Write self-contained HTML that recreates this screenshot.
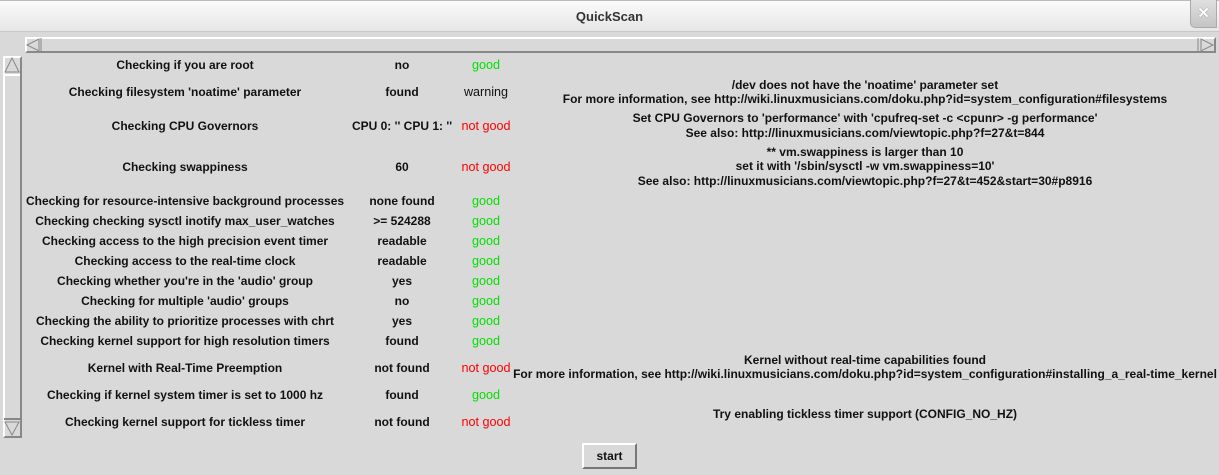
<!DOCTYPE html>
<html><head><meta charset="utf-8"><style>
*{margin:0;padding:0;box-sizing:border-box}
body{width:1219px;height:475px;background:#d9d9d9;position:relative;overflow:hidden;font-family:"Liberation Sans",sans-serif;font-weight:bold;font-size:12px;color:#111}
.title{position:absolute;left:0;top:0;width:1219px;height:32px;background:linear-gradient(#fafafa,#e6e6e6);border-bottom:1px solid #c8c8c8;text-align:center;line-height:32px;font-size:13px;color:#333;border-top:1px solid #bbb}
.close{position:absolute;left:1190px;top:0;width:27px;height:28px;border:1px solid #aaa;border-top:none;border-radius:0 0 0 5px;background:linear-gradient(#e0e0e0,#c4c4c4);color:#fff;text-align:center;line-height:28px;font-size:15px;text-shadow:0 0 1px #666}
.t{position:absolute;white-space:nowrap;transform:translate(-50%,-50%);line-height:14px}
.g{color:#00e000;font-weight:normal;font-size:12.6px}
.b{color:#f00;font-weight:normal;font-size:12.6px}
.w{font-weight:normal;font-size:12.6px}
.hs{position:absolute;left:25px;top:37px;width:1191px;height:16px;border:2px solid;border-color:#fff #888 #888 #fff;background:#d9d9d9}
.vs{position:absolute;left:3px;top:56px;width:19px;height:382px;border:2px solid;border-color:#fff #888 #888 #fff}
.btn{position:absolute;left:582px;top:443px;width:55px;height:26px;border:2px solid;border-color:#fff #777 #777 #fff;text-align:center;line-height:22px}
</style></head><body>
<div class="title">QuickScan</div>
<div class="close">✕</div>
<div class="hs">
<svg style="position:absolute;left:-2px;top:-2px" width="1191" height="16"><polygon points="2,8 14,2 14,14" fill="none" stroke="#888"/><line x1="16" y1="1" x2="16" y2="15" stroke="#888"/><polygon points="1188,8 1176,2 1176,14" fill="none" stroke="#888"/><line x1="1173" y1="1" x2="1173" y2="15" stroke="#888"/></svg>
</div>
<div class="vs">
<svg style="position:absolute;left:-2px;top:-2px" width="19" height="382"><polygon points="9,2 2,16 16,16" fill="none" stroke="#888"/><line x1="1" y1="19" x2="17" y2="19" stroke="#fff" stroke-width="2"/><polygon points="9,379 2,366 16,366" fill="none" stroke="#888"/><line x1="1" y1="363" x2="17" y2="363" stroke="#888" stroke-width="2"/></svg>
</div>

<div class="t" style="left:185px;top:65px">Checking if you are root</div>
<div class="t" style="left:402px;top:65px">no</div>
<div class="t g" style="left:486px;top:65px">good</div>

<div class="t" style="left:185px;top:92px">Checking filesystem 'noatime' parameter</div>
<div class="t" style="left:402px;top:92px">found</div>
<div class="t w" style="left:486px;top:92px">warning</div>
<div class="t" style="left:865px;top:85px">/dev does not have the 'noatime' parameter set</div>
<div class="t" style="left:865px;top:99px">For more information, see http://wiki.linuxmusicians.com/doku.php?id=system_configuration#filesystems</div>

<div class="t" style="left:185px;top:126px">Checking CPU Governors</div>
<div class="t" style="left:402px;top:126px">CPU 0: '' CPU 1: ''</div>
<div class="t b" style="left:486px;top:126px">not good</div>
<div class="t" style="left:865px;top:118px">Set CPU Governors to 'performance' with 'cpufreq-set -c &lt;cpunr&gt; -g performance'</div>
<div class="t" style="left:865px;top:133px">See also: http://linuxmusicians.com/viewtopic.php?f=27&amp;t=844</div>

<div class="t" style="left:185px;top:167px">Checking swappiness</div>
<div class="t" style="left:402px;top:167px">60</div>
<div class="t b" style="left:486px;top:167px">not good</div>
<div class="t" style="left:865px;top:152px">** vm.swappiness is larger than 10</div>
<div class="t" style="left:865px;top:166px">set it with '/sbin/sysctl -w vm.swappiness=10'</div>
<div class="t" style="left:865px;top:181px">See also: http://linuxmusicians.com/viewtopic.php?f=27&amp;t=452&amp;start=30#p8916</div>

<div class="t" style="left:185px;top:201px">Checking for resource-intensive background processes</div>
<div class="t" style="left:402px;top:201px">none found</div>
<div class="t g" style="left:486px;top:201px">good</div>

<div class="t" style="left:185px;top:221px">Checking checking sysctl inotify max_user_watches</div>
<div class="t" style="left:402px;top:221px">&gt;= 524288</div>
<div class="t g" style="left:486px;top:221px">good</div>

<div class="t" style="left:185px;top:241px">Checking access to the high precision event timer</div>
<div class="t" style="left:402px;top:241px">readable</div>
<div class="t g" style="left:486px;top:241px">good</div>

<div class="t" style="left:185px;top:261px">Checking access to the real-time clock</div>
<div class="t" style="left:402px;top:261px">readable</div>
<div class="t g" style="left:486px;top:261px">good</div>

<div class="t" style="left:185px;top:281px">Checking whether you're in the 'audio' group</div>
<div class="t" style="left:402px;top:281px">yes</div>
<div class="t g" style="left:486px;top:281px">good</div>

<div class="t" style="left:185px;top:301px">Checking for multiple 'audio' groups</div>
<div class="t" style="left:402px;top:301px">no</div>
<div class="t g" style="left:486px;top:301px">good</div>

<div class="t" style="left:185px;top:321px">Checking the ability to prioritize processes with chrt</div>
<div class="t" style="left:402px;top:321px">yes</div>
<div class="t g" style="left:486px;top:321px">good</div>

<div class="t" style="left:185px;top:341px">Checking kernel support for high resolution timers</div>
<div class="t" style="left:402px;top:341px">found</div>
<div class="t g" style="left:486px;top:341px">good</div>

<div class="t" style="left:185px;top:368px">Kernel with Real-Time Preemption</div>
<div class="t" style="left:402px;top:368px">not found</div>
<div class="t b" style="left:486px;top:368px">not good</div>
<div class="t" style="left:865px;top:360px">Kernel without real-time capabilities found</div>
<div class="t" style="left:865px;top:374px">For more information, see http://wiki.linuxmusicians.com/doku.php?id=system_configuration#installing_a_real-time_kernel</div>

<div class="t" style="left:185px;top:395px">Checking if kernel system timer is set to 1000 hz</div>
<div class="t" style="left:402px;top:395px">found</div>
<div class="t g" style="left:486px;top:395px">good</div>

<div class="t" style="left:185px;top:422px">Checking kernel support for tickless timer</div>
<div class="t" style="left:402px;top:422px">not found</div>
<div class="t b" style="left:486px;top:422px">not good</div>
<div class="t" style="left:865px;top:414px">Try enabling tickless timer support (CONFIG_NO_HZ)</div>

<div class="btn">start</div>
</body></html>
